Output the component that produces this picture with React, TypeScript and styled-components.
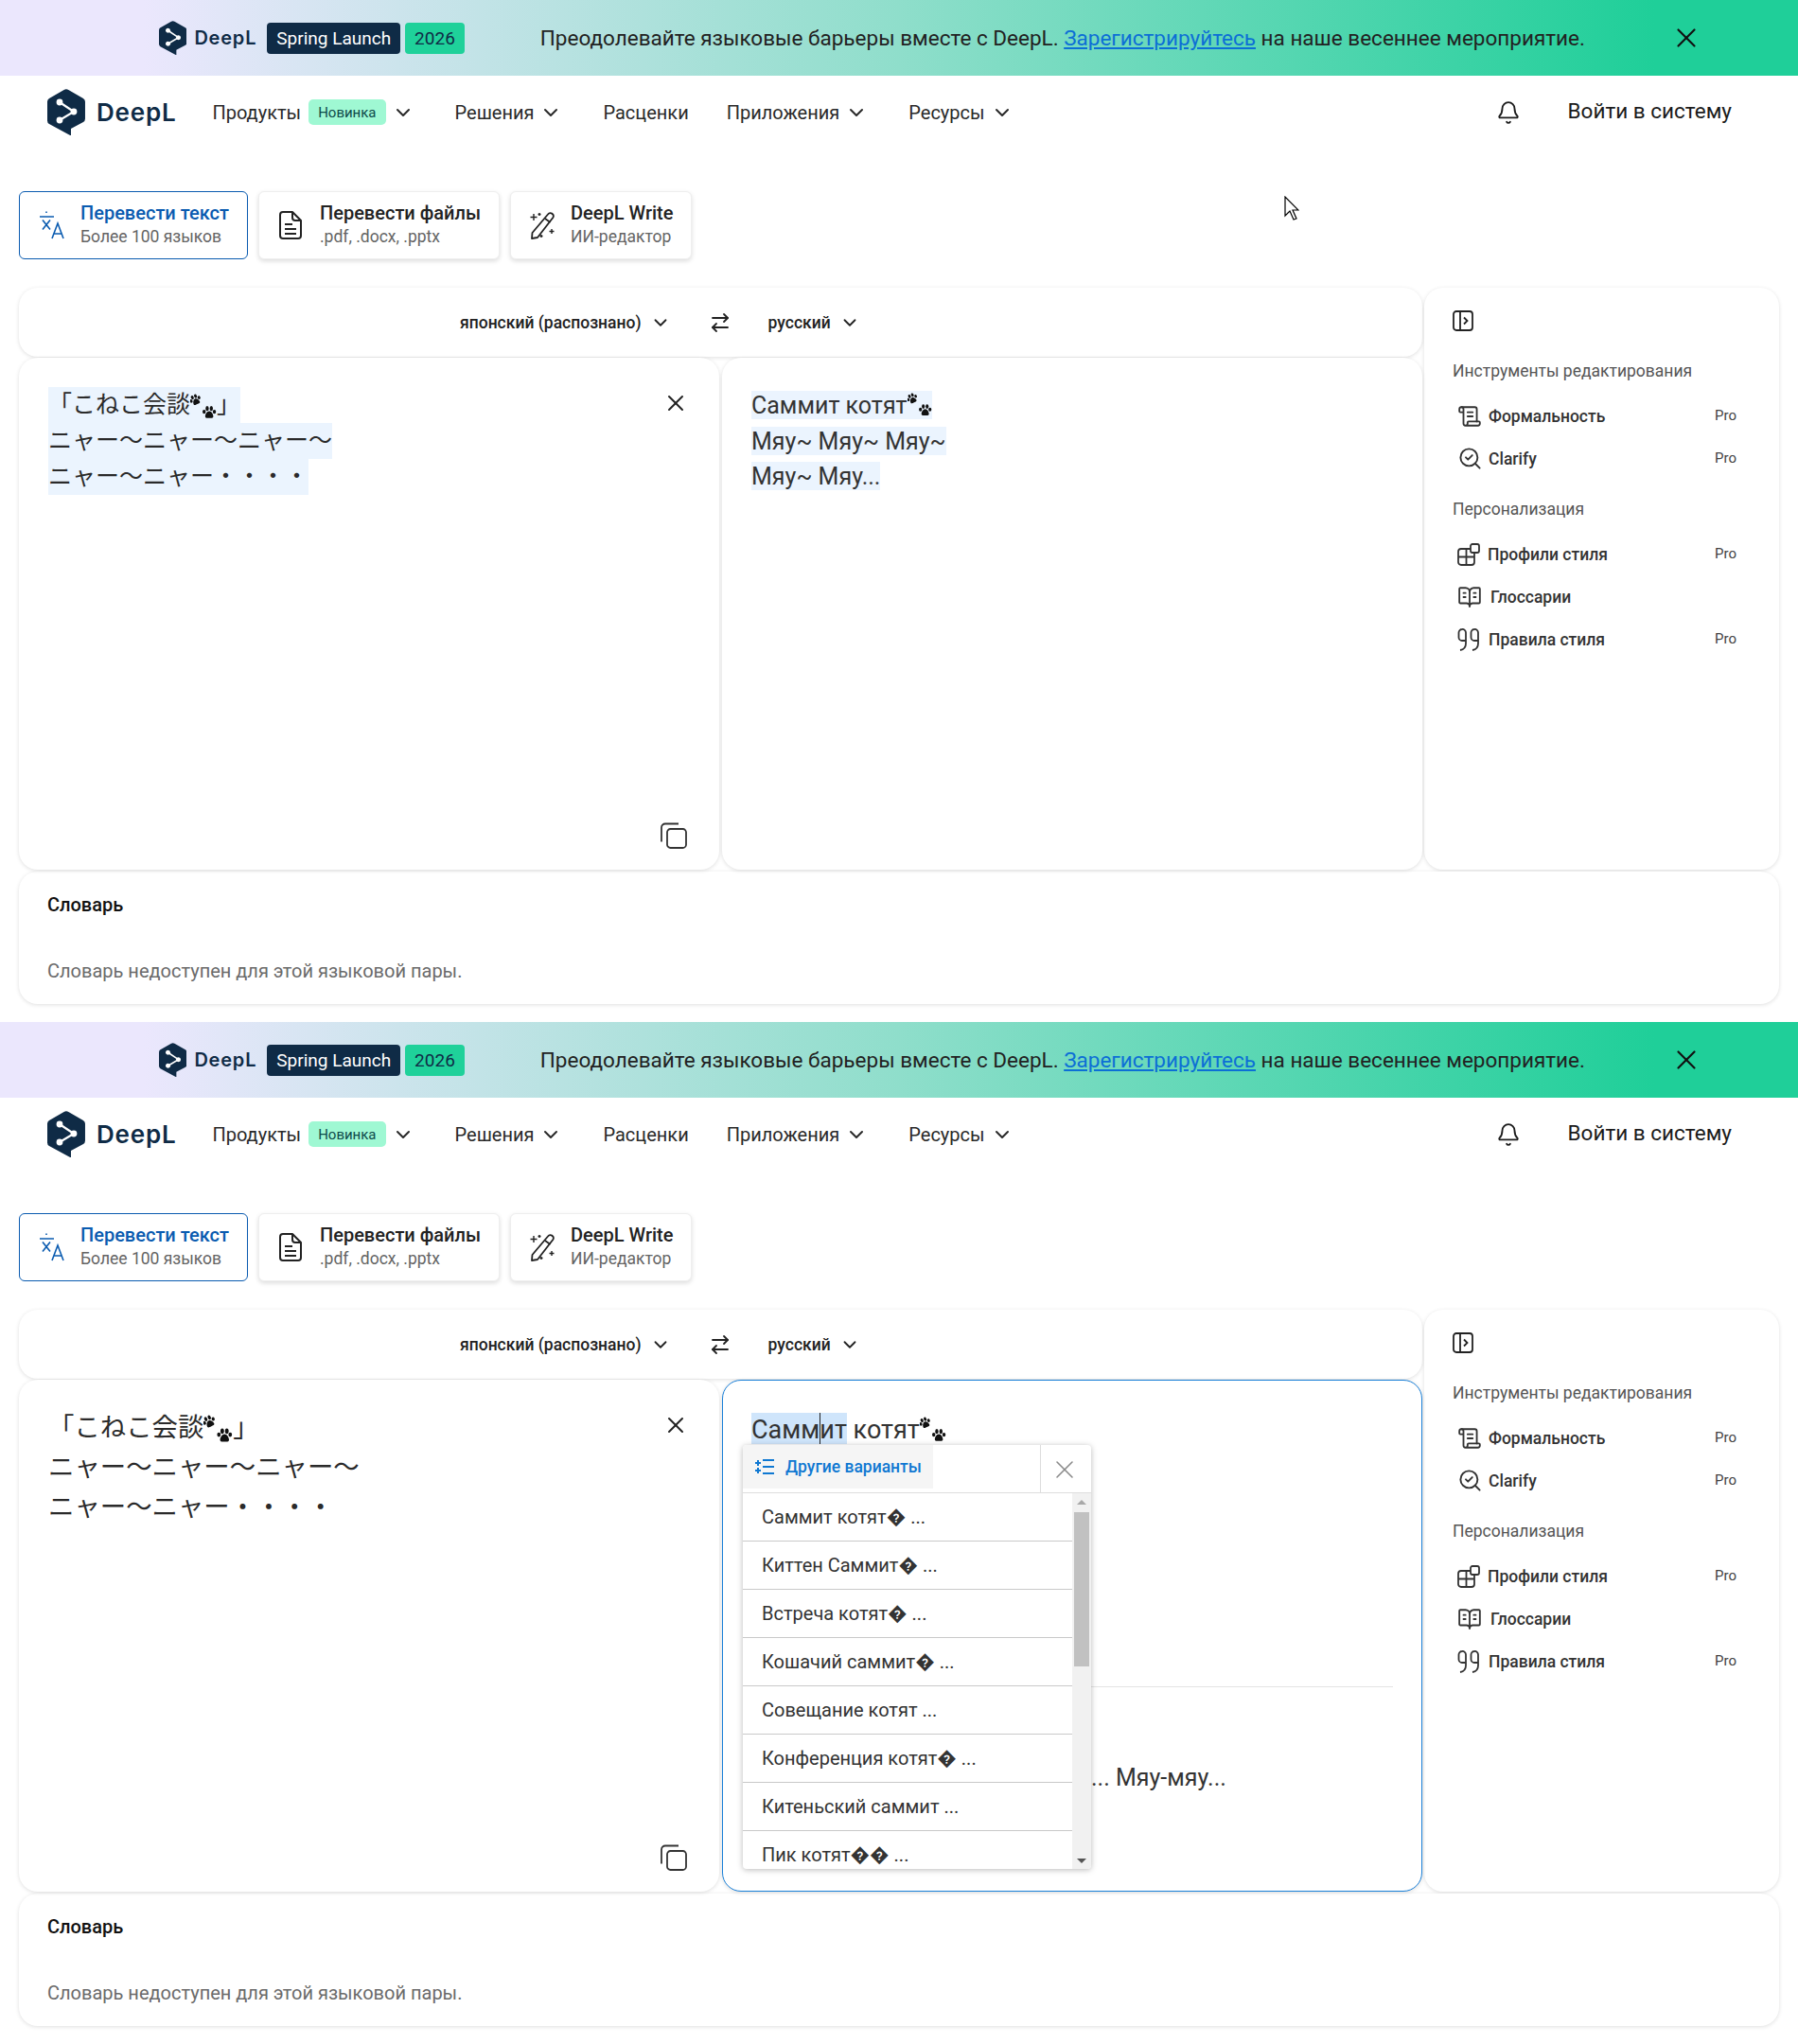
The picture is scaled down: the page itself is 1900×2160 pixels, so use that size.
import React from 'react'
import styled, { createGlobalStyle } from 'styled-components'
import { ArrowRightLeft, Bell, ChevronDown, ScrollText, SearchCheck, BookOpenText, X } from 'lucide-react'

const ROBOTO = `Roboto, 'Liberation Sans', sans-serif`
const INTER = `Inter, 'Liberation Sans', sans-serif`
const CJK = `'Noto Sans CJK JP', 'Noto Sans', sans-serif`
const NAVY = '#0f2b46'

const GlobalStyle = createGlobalStyle`
  html, body {
    margin: 0;
    padding: 0;
    background: #fff;
  }
  * {
    box-sizing: border-box;
  }
`

const Section = styled.section`
  position: relative;
  height: 1080px;
  display: flex;
  flex-direction: column;
  color: #1b1b1b;
  font-family: ${ROBOTO};
`

const Banner = styled.div`
  height: 80px;
  display: flex;
  align-items: center;
  padding-left: 168px;
  background: linear-gradient(90deg, #ebe7fd 8%, #8fdecb 50%, #1fcf99 92%);
`

const BannerBrand = styled.span`
  margin: 0 11px 0 8px;
  font-family: ${INTER};
  font-size: 20px;
  font-weight: 600;
  letter-spacing: 0.8px;
  color: ${NAVY};
`

const Badge = styled.span<{ $accent?: boolean }>`
  height: 33px;
  display: flex;
  align-items: center;
  padding: 0 10px;
  margin-right: 5px;
  border-radius: 4px;
  font-size: 19px;
  background: ${p => (p.$accent ? '#1fd19a' : NAVY)};
  color: ${p => (p.$accent ? NAVY : '#fff')};
`

const BannerText = styled.span`
  margin-left: 75px;
  margin-bottom: 1px;
  font-size: 22.5px;
  color: #222;
  a {
    color: #0c6fd6;
    text-decoration: underline;
  }
`

const BannerClose = styled.span`
  margin-left: 90px;
  display: flex;
`

const Nav = styled.nav`
  height: 77px;
  display: flex;
  align-items: center;
  padding-left: 50px;
`

const NavBrand = styled.span`
  margin: 0 38px 0 12px;
  font-family: ${INTER};
  font-size: 26px;
  font-weight: 600;
  letter-spacing: 0.8px;
  color: ${NAVY};
`

const NavItem = styled.span<{ $gap?: number }>`
  display: flex;
  align-items: center;
  margin-right: ${p => p.$gap ?? 43}px;
  font-size: 20px;
  color: #2a2a2a;
  svg {
    margin-left: 6px;
  }
`

const NewTag = styled.span`
  height: 27px;
  display: flex;
  align-items: center;
  padding: 0 10px;
  margin-left: 8px;
  border-radius: 5px;
  background: #9ff8d3;
  color: #0d4a4a;
  font-size: 15px;
`

const NavRight = styled.div`
  margin-left: auto;
  padding-right: 70px;
  display: flex;
  align-items: center;
  gap: 50px;
`

const Login = styled.span`
  font-size: 22.5px;
  color: #1b1b1b;
  margin-bottom: 4px;
`

const Tabs = styled.div`
  display: flex;
  gap: 11px;
  margin: 45px 0 30px 20px;
`

const Tab = styled.div<{ $active?: boolean; $width: number; $pad: number; $gap: number }>`
  width: ${p => p.$width}px;
  height: 72px;
  display: flex;
  align-items: center;
  gap: ${p => p.$gap}px;
  padding-left: ${p => p.$pad}px;
  border-radius: 6px;
  background: #fff;
  border: ${p => (p.$active ? '1.5px solid #0a5bb0' : '1px solid #eee')};
  box-shadow: ${p => (p.$active ? 'none' : '0 2px 5px rgba(0,0,0,.14)')};
  color: ${p => (p.$active ? '#0a5bb0' : '#222')};
`

const TabText = styled.div`
  display: flex;
  flex-direction: column;
  gap: 2px;
  margin-bottom: 2px;
`

const TabTitle = styled.span`
  font-size: 20px;
  font-weight: 500;
  line-height: 23px;
  white-space: nowrap;
`

const TabSub = styled.span`
  font-size: 17.5px;
  line-height: 22px;
  color: #646464;
  white-space: nowrap;
`

const Workspace = styled.div`
  display: grid;
  grid-template-columns: 1483px 375px;
  gap: 2px;
  margin: 0 20px;
`

const Card = styled.div`
  background: #fff;
  border-radius: 20px;
  box-shadow: 0 1px 4px rgba(0, 0, 0, 0.13);
`

const Translator = styled.div`
  display: flex;
  flex-direction: column;
  gap: 1px;
`

const LangBar = styled(Card)`
  height: 73px;
  display: flex;
  align-items: center;
  padding-left: 466px;
  font-size: 17.5px;
  font-weight: 500;
`

const Lang = styled.span<{ $gap: number }>`
  display: flex;
  align-items: center;
  gap: 9px;
  margin-right: ${p => p.$gap}px;
  color: #222;
`

const Panels = styled.div`
  display: grid;
  grid-template-columns: 740px 740px;
  gap: 3px;
`

const SourcePanel = styled(Card)`
  position: relative;
  height: 541px;
  display: flex;
  justify-content: space-between;
  align-items: flex-start;
  padding: 31px 32px 0 31px;
`

const SourceClose = styled.span`
  margin-top: 3px;
  display: flex;
`

const TargetPanel = styled(Card)<{ $focused?: boolean }>`
  position: relative;
  height: 541px;
  padding: ${p => (p.$focused ? '34px 0 0 30px' : '35px 0 0 31px')};
  border: ${p => (p.$focused ? '1.5px solid #1a80d8' : 'none')};
  font-size: ${p => (p.$focused ? 27 : 25)}px;
  color: #333;
`

const SourceLine = styled.div<{ $wide?: boolean }>`
  width: fit-content;
  height: ${p => (p.$wide ? 42 : 38)}px;
  font-family: ${CJK};
  font-size: ${p => (p.$wide ? 27.4 : 25)}px;
  line-height: ${p => (p.$wide ? 35 : 32)}px;
  background: ${p => (p.$wide ? 'transparent' : '#ebf4fe')};
  color: #2a2a2a;
  white-space: nowrap;
`

const TargetLine = styled.div`
  width: fit-content;
  height: 30px;
  margin-bottom: 7.5px;
  line-height: 32px;
  background: #ebf4fe;
  white-space: nowrap;
`

const FocusLine = styled.div`
  display: flex;
  align-items: flex-start;
  height: 36px;
  line-height: 36px;
  white-space: pre;
`

const Marked = styled.span`
  position: relative;
  height: 33px;
  background: #cfe5fb;
  &::after {
    content: '';
    position: absolute;
    left: 72px;
    top: 0;
    bottom: 0;
    width: 1px;
    background: #222;
  }
`

const Divider = styled.div`
  height: 1px;
  margin: 253px 30px 0 0;
  background: #e4e4e4;
`

const TailLine = styled.div`
  margin-top: 81px;
  padding-left: 359px;
  font-size: 25px;
  white-space: nowrap;
`

const CopyButton = styled.span`
  position: absolute;
  right: 34px;
  bottom: 22px;
  display: flex;
`

const Popup = styled.div`
  position: absolute;
  left: 21px;
  top: 68px;
  width: 368px;
  height: 448px;
  background: #fff;
  border-radius: 4px;
  box-shadow: 0 1px 6px rgba(0, 0, 0, 0.28);
  overflow: hidden;
  color: #333;
`

const PopupHead = styled.div`
  height: 51px;
  display: flex;
  border-bottom: 1px solid #ddd;
`

const MoreTab = styled.div`
  width: 201px;
  height: 46px;
  display: flex;
  align-items: center;
  gap: 11px;
  padding-left: 12px;
  background: #f5f5f5;
  color: #0f78d2;
  font-size: 17.5px;
  font-weight: 500;
`

const PopupClose = styled.div`
  margin-left: auto;
  width: 54px;
  display: flex;
  align-items: center;
  justify-content: center;
  padding: 2px 4px 0 0;
  border-left: 1px solid #ddd;
  color: #8a8a8a;
`

const PopupBody = styled.div`
  display: flex;
  height: 397px;
`

const Options = styled.div`
  flex: 1;
  overflow: hidden;
`

const Option = styled.div`
  height: 51px;
  display: flex;
  align-items: center;
  padding-left: 20px;
  border-bottom: 1.5px solid #c9c9c9;
  font-size: 20px;
  white-space: nowrap;
`

const Track = styled.div`
  position: relative;
  width: 20px;
  background: #f1f1f1;
`

const Thumb = styled.div`
  position: absolute;
  top: 20px;
  left: 2px;
  width: 16px;
  height: 163px;
  background: #c1c1c1;
`

const Arrow = styled.div<{ $down?: boolean }>`
  position: absolute;
  left: 5px;
  ${p => (p.$down ? 'bottom: 6px; border-top: 5px solid #555;' : 'top: 7px; border-bottom: 5px solid #a8a8a8;')}
  border-left: 5px solid transparent;
  border-right: 5px solid transparent;
`

const Sidebar = styled(Card)`
  height: 615px;
  padding: 24px 45px 0 30px;
`

const ToolHead = styled.div`
  margin: 27px 0 14px;
  font-size: 17.5px;
  line-height: 22px;
  color: #555;
`

const Tool = styled.div<{ $gap: number }>`
  height: 45px;
  display: flex;
  align-items: center;
  gap: ${p => p.$gap}px;
  padding-left: 5px;
  font-size: 17.5px;
  font-weight: 500;
  color: #333;
`

const ToolPro = styled.span`
  margin-left: auto;
  margin-bottom: 2px;
  font-size: 15px;
  font-weight: 400;
  color: #444;
`

const SideGroup = styled.div`
  margin-top: -7px;
`

const Dictionary = styled(Card)`
  height: 140px;
  margin: 2px 20px 0;
  padding: 23px 30px;
`

const DictTitle = styled.div`
  font-size: 20px;
  font-weight: 500;
  line-height: 24px;
  color: #111;
`

const DictNote = styled.div`
  margin-top: 46px;
  font-size: 20px;
  line-height: 24px;
  color: #6b6b6b;
`

const Pointer = styled.svg`
  position: absolute;
  left: 1357px;
  top: 207px;
`

const PawMark = styled.svg<{ $drop: number }>`
  vertical-align: -${p => p.$drop}px;
  color: #111;
`

const Logo = ({ size }: { size: number }) => (
  <svg width={size * 0.816} height={size} viewBox="0 0 40 49">
    <path
      d="M17.6 1 2 10Q0 11.2 0 13.5V33.500Q0 35.800 2 37L25 49.500V42L38 35Q40 33.800 40 31.500V13.500Q40 11.200 38 10L22.400 1Q20-.4 17.600 1Z"
      fill={NAVY}
    />
    <path d="M13 14 28 24 13 33" fill="none" stroke="#fff" strokeWidth="2.2" />
    <circle cx="13" cy="14" r="3.400" fill="#fff" />
    <circle cx="28" cy="24" r="3.400" fill="#fff" />
    <circle cx="13" cy="33" r="3.400" fill="#fff" />
  </svg>
)

const OnePaw = ({ x, y, s, r }: { x: number; y: number; s: number; r: number }) => (
  <g transform={`translate(${x} ${y}) rotate(${r} 7.500 7.500) scale(${s})`} fill="currentColor">
    <ellipse cx="1.800" cy="6.400" rx="1.800" ry="2.300" />
    <ellipse cx="5.200" cy="2.800" rx="1.800" ry="2.700" />
    <ellipse cx="9.800" cy="2.800" rx="1.800" ry="2.700" />
    <ellipse cx="13.200" cy="6.400" rx="1.800" ry="2.300" />
    <path d="M7.500 5.800C4.800 5.800 3 9.500 3 11.500 3 13.800 5.200 13.400 7.500 13.400 9.800 13.400 12 13.800 12 11.500 12 9.500 10.200 5.800 7.500 5.800Z" />
  </g>
)

const Paws = ({ size, drop }: { size: number; drop: number }) => (
  <PawMark $drop={drop} width={size} height={size} viewBox="0 0 28 28">
    <OnePaw x={0} y={0} s={0.8} r={-25} />
    <OnePaw x={13} y={13} s={0.95} r={0} />
  </PawMark>
)

const TranslateIcon = () => (
  <svg width="28" height="32" viewBox="0 0 28 32" fill="none" stroke="currentColor" strokeWidth="1.600">
    <path d="M8 1.500v1.500M1 7h15M4 10.500l8 10M12 10.500l-8 10" />
    <path d="M14 30l6-16 6 16M16.200 25h7.600" />
  </svg>
)

const FileIcon = () => (
  <svg width="24" height="30" viewBox="0 0 24 30" fill="none" stroke="#222" strokeWidth="2" strokeLinejoin="round">
    <path d="M4 1h10l9 9v16a3 3 0 0 1-3 3H4a3 3 0 0 1-3-3V4a3 3 0 0 1 3-3Z" />
    <path d="M14 1v6a3 3 0 0 0 3 3h6M6 14h8M6 19h12M6 24h12" />
  </svg>
)

const WriteIcon = () => (
  <svg width="30" height="30" viewBox="0 0 30 30" fill="none" stroke="#222" strokeWidth="1.800" strokeLinejoin="round">
    <path d="M21 3.500a3.200 3.200 0 0 1 5.500 3.200L10 28l-6 1 .500-6Z" />
    <path d="M18 8l5.500 4" />
    <path d="M6 3v7M2.500 6.500h7M12 2v3M10.500 3.500h3M25 19v5M22.500 21.500h5M14 25v3M12.500 26.500h3" strokeWidth="1.400" />
  </svg>
)

const CopyIcon = () => (
  <svg width="28" height="28" viewBox="0 0 28 28" fill="none" stroke="#333" strokeWidth="1.800">
    <path d="M19 1.500H5a4 4 0 0 0-4 4v15" />
    <rect x="7" y="7" width="20" height="20" rx="3.500" />
  </svg>
)

const PanelIcon = () => (
  <svg width="22" height="22" viewBox="0 0 22 22" fill="none" stroke="#222" strokeWidth="1.800">
    <rect x="1" y="1" width="20" height="20" rx="3" />
    <path d="M8 1v20M12 7.500l3.500 3.500-3.500 3.500" />
  </svg>
)

const StyleIcon = () => (
  <svg width="24" height="24" viewBox="0 0 24 24" fill="none" stroke="#333" strokeWidth="1.800">
    <rect x="1" y="6" width="17" height="17" rx="3" />
    <path d="M1 14.500h17M9.500 6v17" />
    <rect x="14" y="1" width="9" height="9" rx="2" fill="#fff" />
  </svg>
)

const QuoteIcon = () => (
  <svg width="24" height="24" viewBox="0 0 24 24" fill="none" stroke="#333" strokeWidth="1.800">
    <path d="M5 1a3.500 3.500 0 0 0-3.500 3.500v5A3.500 3.500 0 0 0 5 13h4V4.500A3.500 3.500 0 0 0 5 1ZM9 13v3c0 4-2.500 6.500-6 7" />
    <path d="M18 1a3.500 3.500 0 0 0-3.500 3.500v5A3.500 3.500 0 0 0 18 13h4V4.500A3.500 3.500 0 0 0 18 1ZM22 13v3c0 4-2.500 6.500-6 7" />
  </svg>
)

const VariantsIcon = () => (
  <svg width="22" height="18" viewBox="0 0 22 18" fill="none" stroke="#0f78d2" strokeWidth="2">
    <path d="M9 2h12M9 9h12M9 16h12M1 5h6M4 2v6M1 13h6M4 10v6" />
  </svg>
)

const OPTIONS = [
  'Саммит котят\uFFFD ...',
  'Киттен Саммит\uFFFD ...',
  'Встреча котят\uFFFD ...',
  'Кошачий саммит\uFFFD ...',
  'Совещание котят ...',
  'Конференция котят\uFFFD ...',
  'Китеньский саммит ...',
  'Пик котят\uFFFD\uFFFD ...',
]

const Screen = ({ editing }: { editing?: boolean }) => (
  <Section>
    <Banner>
      <Logo size={36} />
      <BannerBrand>DeepL</BannerBrand>
      <Badge>Spring Launch</Badge>
      <Badge $accent>2026</Badge>
      <BannerText>
        Преодолевайте языковые барьеры вместе с DeepL. <a href="#">Зарегистрируйтесь</a> на наше весеннее мероприятие.
      </BannerText>
      <BannerClose>
        <X size={34} strokeWidth={1.5} color="#111" />
      </BannerClose>
    </Banner>

    <Nav>
      <Logo size={49} />
      <NavBrand>DeepL</NavBrand>
      <NavItem>
        Продукты
        <NewTag>Новинка</NewTag>
        <ChevronDown size={24} />
      </NavItem>
      <NavItem>
        Решения
        <ChevronDown size={24} />
      </NavItem>
      <NavItem $gap={40}>Расценки</NavItem>
      <NavItem>
        Приложения
        <ChevronDown size={24} />
      </NavItem>
      <NavItem $gap={0}>
        Ресурсы
        <ChevronDown size={24} />
      </NavItem>
      <NavRight>
        <Bell size={26} strokeWidth={1.7} />
        <Login>Войти в систему</Login>
      </NavRight>
    </Nav>

    <Tabs>
      <Tab $active $width={242} $pad={20} $gap={16}>
        <TranslateIcon />
        <TabText>
          <TabTitle>Перевести текст</TabTitle>
          <TabSub>Более 100 языков</TabSub>
        </TabText>
      </Tab>
      <Tab $width={255} $pad={21} $gap={19}>
        <FileIcon />
        <TabText>
          <TabTitle>Перевести файлы</TabTitle>
          <TabSub>.pdf, .docx, .pptx</TabSub>
        </TabText>
      </Tab>
      <Tab $width={192} $pad={18} $gap={15}>
        <WriteIcon />
        <TabText>
          <TabTitle>DeepL Write</TabTitle>
          <TabSub>ИИ-редактор</TabSub>
        </TabText>
      </Tab>
    </Tabs>

    <Workspace>
      <Translator>
        <LangBar>
          <Lang $gap={40}>
            японский (распознано)
            <ChevronDown size={22} />
          </Lang>
          <Lang $gap={39}>
            <ArrowRightLeft size={24} strokeWidth={1.8} />
          </Lang>
          <Lang $gap={0}>
            русский
            <ChevronDown size={22} />
          </Lang>
        </LangBar>
        <Panels>
          <SourcePanel>
            <div>
              <SourceLine $wide={editing}>
                「こねこ会談
                <Paws size={editing ? 31 : 28} drop={8} />」
              </SourceLine>
              <SourceLine $wide={editing}>ニャー～ニャー～ニャー～</SourceLine>
              <SourceLine $wide={editing}>ニャー～ニャー・・・・</SourceLine>
            </div>
            <SourceClose>
              <X size={28} strokeWidth={1.7} color="#222" />
            </SourceClose>
            <CopyButton>
              <CopyIcon />
            </CopyButton>
          </SourcePanel>
          {editing ? (
            <TargetPanel $focused>
              <FocusLine>
                <Marked>Саммит</Marked>
                <span>
                  {' '}котят
                  <Paws size={28} drop={5} />
                </span>
              </FocusLine>
              <Divider />
              <TailLine>... Мяу-мяу...</TailLine>
              <Popup>
                <PopupHead>
                  <MoreTab>
                    <VariantsIcon />
                    Другие варианты
                  </MoreTab>
                  <PopupClose>
                    <X size={32} strokeWidth={1.2} />
                  </PopupClose>
                </PopupHead>
                <PopupBody>
                  <Options>
                    {OPTIONS.map(o => (
                      <Option key={o}>{o}</Option>
                    ))}
                  </Options>
                  <Track>
                    <Arrow />
                    <Thumb />
                    <Arrow $down />
                  </Track>
                </PopupBody>
              </Popup>
            </TargetPanel>
          ) : (
            <TargetPanel>
              <TargetLine>
                Саммит котят
                <Paws size={26} drop={4} />
              </TargetLine>
              <TargetLine>Мяу~ Мяу~ Мяу~</TargetLine>
              <TargetLine>Мяу~ Мяу...</TargetLine>
            </TargetPanel>
          )}
        </Panels>
      </Translator>

      <Sidebar>
        <PanelIcon />
        <ToolHead>Инструменты редактирования</ToolHead>
        <Tool $gap={7}>
          <ScrollText size={26} strokeWidth={1.700} />
          Формальность
          <ToolPro>Pro</ToolPro>
        </Tool>
        <Tool $gap={6}>
          <SearchCheck size={27} strokeWidth={1.700} />
          Clarify
          <ToolPro>Pro</ToolPro>
        </Tool>
        <SideGroup>
          <ToolHead>Персонализация</ToolHead>
          <Tool $gap={8}>
            <StyleIcon />
            Профили стиля
            <ToolPro>Pro</ToolPro>
          </Tool>
          <Tool $gap={9}>
            <BookOpenText size={26} strokeWidth={1.700} />
            Глоссарии
          </Tool>
          <Tool $gap={9}>
            <QuoteIcon />
            Правила стиля
            <ToolPro>Pro</ToolPro>
          </Tool>
        </SideGroup>
      </Sidebar>
    </Workspace>

    <Dictionary>
      <DictTitle>Словарь</DictTitle>
      <DictNote>Словарь недоступен для этой языковой пары.</DictNote>
    </Dictionary>

    {!editing && (
      <Pointer width="16" height="27" viewBox="0 0 16 27">
        <path d="M1 1v20l5-5 4 9 3-1-4-9h6Z" fill="#fff" stroke="#000" strokeWidth="1.200" />
      </Pointer>
    )}
  </Section>
)

export default function App() {
  return (
    <>
      <GlobalStyle />
      <Screen />
      <Screen editing />
    </>
  )
}
